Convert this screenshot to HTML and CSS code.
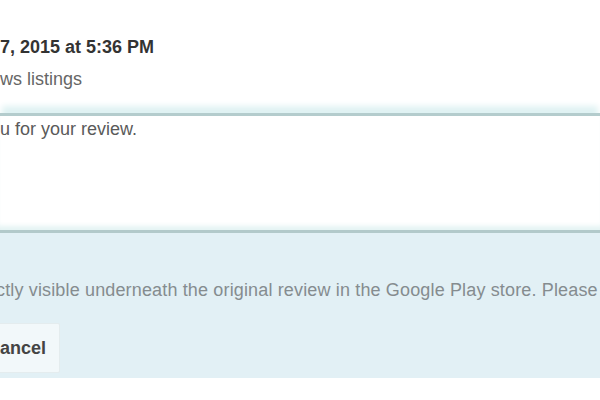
FILE: index.html
```html
<!DOCTYPE html>
<html lang="en">
<head>
    <meta charset="UTF-8">
    <title>Reply to review</title>
    <link rel="stylesheet" href="styles.css">
</head>
<body>
    <div class="reply">
        <!-- Review meta -->
        <div class="meta">
            <div class="date">7, 2015 at 5:36 PM</div>
            <div class="source">ws listings</div>
        </div>

        <!-- Reply editor -->
        <div class="editor">
            <div class="editor-text">u for your review.</div>
        </div>

        <!-- Notice + actions -->
        <div class="notice">
            <p class="notice-text">ctly visible underneath the original review in the Google Play store. Please</p>
            <div class="actions">
                <button class="btn">ancel</button>
            </div>
        </div>
    </div>
</body>
</html>
```

FILE: styles.css
```css
body {
    margin: 0;
    padding: 0;
    background-color: #fff;
    font-family: "Liberation Sans", Arial, sans-serif;
    overflow: hidden;
}
.reply {
    width: 600px;
    height: 400px;
}
.meta {
    padding-top: 36px;
    padding-bottom: 23px;
}
.date {
    font-size: 18px;
    font-weight: bold;
    color: #333;
    line-height: 22px;
}
.source {
    margin-top: 10px;
    font-size: 18px;
    color: #666;
    line-height: 22px;
}
.editor {
    height: 120px;
    box-sizing: border-box;
    padding-top: 2px;
    background-color: #fff;
    border-top: 3px solid #b4cccd;
    border-bottom: 3px solid #b2c9ca;
    box-shadow: 0 -9px 6px -2px #dff2f3, inset 0 -7px 5px -3px #e4f3f3;
}
.editor-text {
    font-size: 18px;
    color: #5a5a5a;
    line-height: 22px;
}
.notice {
    height: 145px;
    box-sizing: border-box;
    background-color: #e2f0f5;
    padding-top: 46px;
}
.notice-text {
    margin: 0 0 0 -4px;
    font-size: 18px;
    color: #858c8f;
    line-height: 22px;
    letter-spacing: 0.15px;
    white-space: nowrap;
}
.actions {
    margin-top: 22px;
}
.btn {
    height: 50px;
    width: 64px;
    margin-left: -4px;
    padding: 0 0 0 3px;
    text-align: left;
    background-color: #f2f8fa;
    border: 1px solid #e4ecee;
    border-radius: 2px;
    font-family: "Liberation Sans", Arial, sans-serif;
    font-size: 18px;
    font-weight: bold;
    color: #444;
}
```
